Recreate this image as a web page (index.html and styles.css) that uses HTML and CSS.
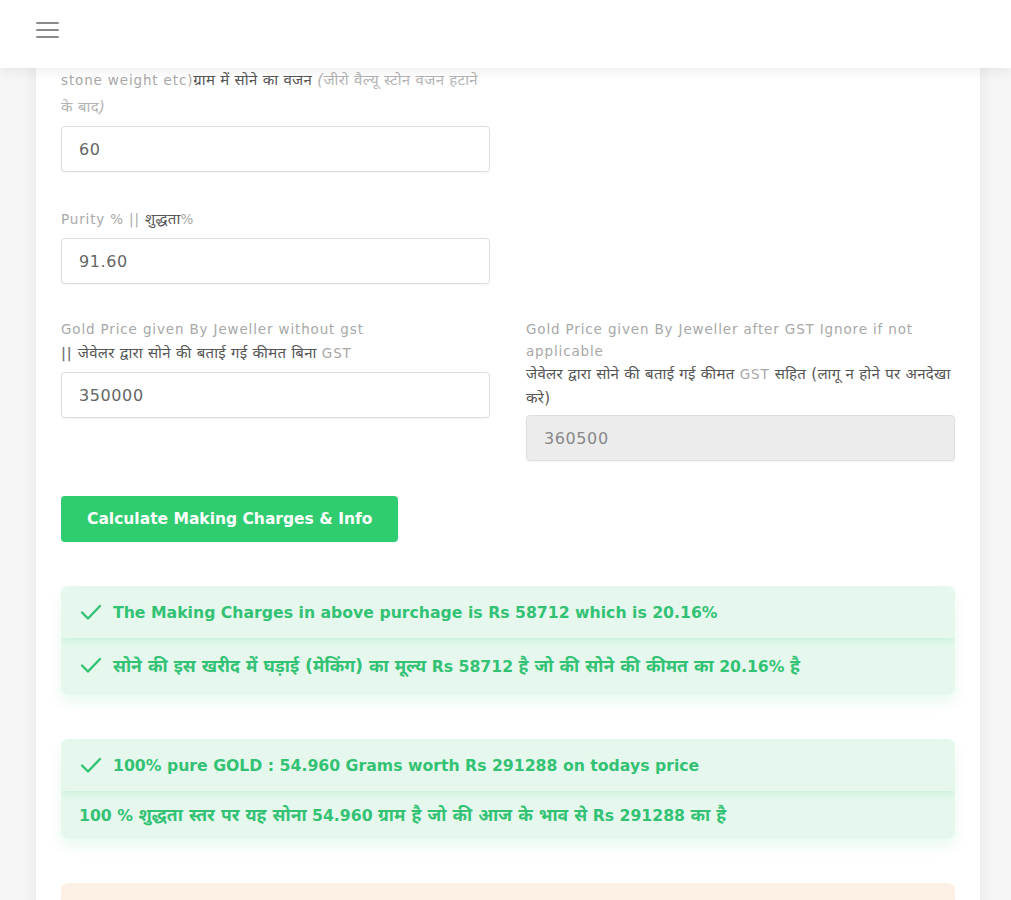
FILE: index.html
```html
<!DOCTYPE html>
<html lang="hi">
<head>
<meta charset="utf-8">
<title>Making Charges Calculator</title>
<link rel="stylesheet" href="styles.css">
</head>
<body>
<header class="topbar">
  <button class="menu-btn" aria-label="menu">
    <span></span><span></span><span></span>
  </button>
</header>
<main class="page">
  <section class="card">
    <div class="form-grid">
      <div class="field">
        <label class="label">Gold weight in Grams (after removing zero value<br>stone weight etc)<span class="hi">ग्राम में सोने का वजन</span> <em class="hi note">(जीरो वैल्यू स्टोन वजन हटाने के बाद)</em></label>
        <div class="input">60</div>
      </div>
      <div class="field empty"></div>

      <div class="field">
        <label class="label">Purity % || <span class="hi">शुद्धता</span>%</label>
        <div class="input">91.60</div>
      </div>
      <div class="field empty"></div>

      <div class="field">
        <label class="label">Gold Price given By Jeweller without gst<br><span class="bars">||</span> <span class="hi">जेवेलर द्वारा सोने की बताई गई कीमत बिना</span> GST</label>
        <div class="input">350000</div>
      </div>
      <div class="field">
        <label class="label tight">Gold Price given By Jeweller after GST Ignore if not applicable<br><span class="hi">जेवेलर द्वारा सोने की बताई गई कीमत</span> GST <span class="hi">सहित (लागू न होने पर अनदेखा करे)</span></label>
        <div class="input disabled">360500</div>
      </div>
    </div>

    <button class="calc-btn">Calculate Making Charges &amp; Info</button>

    <div class="alert success">
      <div class="row"><svg class="check" viewBox="0 0 24 24"><path d="M3 12.5l6 6L21 6"/></svg><span>The Making Charges in above purchage is Rs 58712 which is 20.16%</span></div>
      <div class="row hi-row tall"><svg class="check" viewBox="0 0 24 24"><path d="M3 12.5l6 6L21 6"/></svg><span><span class="dv">सोने की इस खरीद में घड़ाई (मेकिंग) का मूल्य</span> Rs 58712 <span class="dv">है जो की सोने की कीमत का</span> 20.16% <span class="dv">है</span></span></div>
    </div>

    <div class="alert success">
      <div class="row"><svg class="check" viewBox="0 0 24 24"><path d="M3 12.5l6 6L21 6"/></svg><span>100% pure GOLD : 54.960 Grams worth Rs 291288 on todays price</span></div>
      <div class="row hi-row"><span>100 % <span class="dv">शुद्धता स्तर पर यह सोना</span> 54.960 <span class="dv">ग्राम है जो की आज के भाव से</span> Rs 291288 <span class="dv">का है</span></span></div>
    </div>

    <div class="alert warning">
      <div class="row"><span>Making charges are calculated on the basis of gold price given by the jeweller.</span></div>
    </div>
  </section>
</main>
</body>
</html>
```

FILE: styles.css
```css
* { box-sizing: border-box; }
html, body { margin: 0; padding: 0; }
body {
  background: #f6f6f6;
  font-family: "DejaVu Sans", "Noto Sans", sans-serif;
  color: #555;
  height: 900px;
  overflow: hidden;
}
.topbar {
  position: fixed;
  top: 0; left: 0; right: 0;
  height: 68px;
  background: #fff;
  box-shadow: 0 3px 12px rgba(0,0,0,0.07);
  z-index: 10;
  display: flex;
  align-items: center;
  padding-left: 36px;
}
.menu-btn {
  background: none;
  border: 0;
  padding: 0;
  width: 23px;
  display: flex;
  flex-direction: column;
  gap: 4.5px;
  margin-top: -8px;
}
.menu-btn span {
  display: block;
  height: 2.5px;
  background: #8a8a8a;
  border-radius: 1px;
}
.page {
  margin-left: 36px;
  width: 944px;
}
.card {
  background: #fff;
  box-shadow: 0 0 16px rgba(0,0,0,0.07);
  padding: 45px 25px 40px;
}
.form-grid {
  display: grid;
  grid-template-columns: 429px 429px;
  column-gap: 36px;
  align-items: start;
}
.field { margin-bottom: 34px; }
.label {
  display: block;
  font-size: 13.5px;
  letter-spacing: 0.85px;
  line-height: 22px;
  color: #a8a8a8;
  margin-bottom: 5px;
}
.label .hi {
  color: #555;
  font-size: 15px;
  letter-spacing: 0.3px;
  line-height: 27px;
}
.label.tight .hi { line-height: 24px; }
.label .note { color: #b4b4b4; }
.label .bars { color: #777; font-weight: 700; }
.input {
  height: 46px;
  border: 1px solid #dedede;
  border-radius: 4px;
  padding: 0 17px;
  display: flex;
  align-items: center;
  font-size: 16px;
  letter-spacing: 0.6px;
  color: #666;
  background: #fff;
  box-shadow: 0 1px 2px rgba(0,0,0,0.05);
}
.input.disabled { background: #ececec; color: #888; }
.calc-btn {
  display: block;
  margin-top: 1px;
  height: 46px;
  padding: 0 26px;
  background: #2fcc70;
  color: #fff;
  border: 0;
  border-radius: 4px;
  font-family: inherit;
  font-weight: 700;
  font-size: 15.5px;
}
.alert {
  margin-top: 44px;
  border-radius: 7px;
  overflow: hidden;
}
.alert.success {
  background: #e6f8ee;
  box-shadow: 0 8px 14px rgba(46,204,113,0.10);
}
.alert .row {
  display: flex;
  align-items: center;
  gap: 10px;
  min-height: 52px;
  padding: 0 18px;
  font-size: 15.7px;
  font-weight: 700;
  color: #33c274;
}
.alert .dv { font-size: 17.5px; }
.alert.success .row:first-child {
  box-shadow: 0 3px 7px rgba(46,204,113,0.14);
  position: relative;
}
.alert .hi-row { min-height: 48px; padding-bottom: 2px; }
.alert .hi-row.tall { min-height: 57px; padding-bottom: 4px; }
.check {
  width: 24px;
  height: 24px;
  flex: none;
  fill: none;
  stroke: #33c274;
  stroke-width: 2.4;
  stroke-linecap: round;
  stroke-linejoin: round;
}
.alert.warning {
  background: #fdf1e6;
}
.alert.warning .row { color: #f09a4a; }
```
